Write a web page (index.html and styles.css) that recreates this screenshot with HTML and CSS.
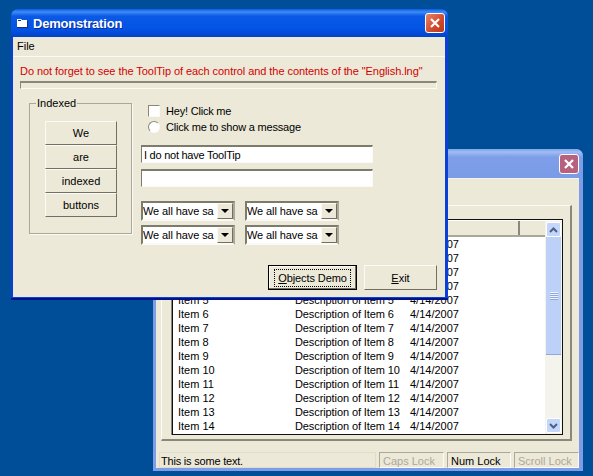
FILE: index.html
```html
<!DOCTYPE html>
<html lang="en">
<head>
  <meta charset="UTF-8" />
  <title>Demonstration</title>
  <link rel="stylesheet" href="styles.css">
</head>
<body>

<div class="desktop">

  <div class="window back">
    <div class="titlebar">
      <span class="title"></span>
      <span class="close"><svg width="12" height="12" viewBox="0 0 12 12"><path d="M2 2l8 8M10 2l-8 8" stroke="#fff" stroke-width="2.2" fill="none"/></svg></span>
    </div>
    <div class="client">
      <div class="frame">
        <div class="list">
          <div class="list-main">
            <div class="list-head"><span class="head-a"></span><span class="head-b"></span></div>
            <div class="row"><span class="c1">Item 1</span><span class="c2">Description of Item 1</span><span>4/14/2007</span></div>
            <div class="row"><span class="c1">Item 2</span><span class="c2">Description of Item 2</span><span>4/14/2007</span></div>
            <div class="row"><span class="c1">Item 3</span><span class="c2">Description of Item 3</span><span>4/14/2007</span></div>
            <div class="row"><span class="c1">Item 4</span><span class="c2">Description of Item 4</span><span>4/14/2007</span></div>
            <div class="row"><span class="c1">Item 5</span><span class="c2">Description of Item 5</span><span>4/14/2007</span></div>
            <div class="row"><span class="c1">Item 6</span><span class="c2">Description of Item 6</span><span>4/14/2007</span></div>
            <div class="row"><span class="c1">Item 7</span><span class="c2">Description of Item 7</span><span>4/14/2007</span></div>
            <div class="row"><span class="c1">Item 8</span><span class="c2">Description of Item 8</span><span>4/14/2007</span></div>
            <div class="row"><span class="c1">Item 9</span><span class="c2">Description of Item 9</span><span>4/14/2007</span></div>
            <div class="row"><span class="c1">Item 10</span><span class="c2">Description of Item 10</span><span>4/14/2007</span></div>
            <div class="row"><span class="c1">Item 11</span><span class="c2">Description of Item 11</span><span>4/14/2007</span></div>
            <div class="row"><span class="c1">Item 12</span><span class="c2">Description of Item 12</span><span>4/14/2007</span></div>
            <div class="row"><span class="c1">Item 13</span><span class="c2">Description of Item 13</span><span>4/14/2007</span></div>
            <div class="row"><span class="c1">Item 14</span><span class="c2">Description of Item 14</span><span>4/14/2007</span></div>
          </div>
          <div class="scrollbar">
            <span class="sb-btn"><svg width="9" height="6" viewBox="0 0 9 6"><path d="M1 5l3.500-3.500L8 5" stroke="#4d6185" stroke-width="2" fill="none"/></svg></span>
            <span class="sb-thumb"><span class="grip"></span></span>
            <span class="sb-track"></span>
            <span class="sb-btn"><svg width="9" height="6" viewBox="0 0 9 6"><path d="M1 1l3.500 3.500L8 1" stroke="#4d6185" stroke-width="2" fill="none"/></svg></span>
          </div>
        </div>
      </div>
      <div class="statusbar">
        <span class="panel panel-main">This is some text.</span>
        <span class="panel panel-off">Caps Lock</span>
        <span class="panel panel-num">Num Lock</span>
        <span class="panel panel-off panel-scroll">Scroll Lock</span>
      </div>
    </div>
  </div>

  <div class="window front">
    <div class="titlebar">
      <svg class="app-icon" width="11" height="10" viewBox="0 0 11 10"><path d="M0 1h4l1 1h5v7H0z" fill="#fff"/><path d="M1 2h3v1H1zM0 9h10v1H0zM10 3h1v7h-1z" fill="#1b2f70"/></svg>
      <span class="title">Demonstration</span>
      <span class="close"><svg width="12" height="12" viewBox="0 0 12 12"><path d="M2 2l8 8M10 2l-8 8" stroke="#fff" stroke-width="2.200" fill="none"/></svg></span>
    </div>
    <div class="client">
      <div class="menubar"><span>File</span></div>
      <div class="content">
        <div class="notice">Do not forget to see the ToolTip of each control and the contents of the "English.lng"</div>
        <div class="progress"></div>
        <div class="main">
          <fieldset class="group">
            <legend>Indexed</legend>
            <button class="btn idx">We</button>
            <button class="btn idx">are</button>
            <button class="btn idx">indexed</button>
            <button class="btn idx">buttons</button>
          </fieldset>
          <div class="controls">
            <label class="opt"><span class="check"></span>Hey! Click me</label>
            <label class="opt"><span class="radio"></span>Click me to show a message</label>
            <div class="textbox tb-first">I do not have ToolTip</div>
            <div class="textbox"></div>
            <div class="combos">
              <div class="combo"><span class="combo-text">We all have sa</span><span class="arrow"></span></div>
              <div class="combo"><span class="combo-text">We all have sa</span><span class="arrow"></span></div>
              <div class="combo"><span class="combo-text">We all have sa</span><span class="arrow"></span></div>
              <div class="combo"><span class="combo-text">We all have sa</span><span class="arrow"></span></div>
            </div>
          </div>
        </div>
        <div class="actions">
          <button class="btn action default"><span class="focus"><u>O</u>bjects Demo</span></button>
          <button class="btn action exit"><span><u>E</u>xit</span></button>
        </div>
      </div>
    </div>
  </div>

</div>

</body>
</html>
```

FILE: styles.css
```css
* {
  box-sizing: border-box;
}
body {
  margin: 0;
  background: #004e98;
  font-family: "Liberation Sans", Arial, sans-serif;
  font-size: 11px;
  color: #000;
}
.desktop {
  position: relative;
  width: 593px;
  height: 476px;
  overflow: hidden;
  background: #004e98;
}

/* windows */
.window {
  position: absolute;
  display: flex;
  flex-direction: column;
  border-radius: 7px 7px 0 0;
}
.front {
  left: 11px;
  top: 9px;
  width: 437px;
  height: 291px;
  background: #0a3fd8;
  border-bottom: 2px solid #00138c;
}
.back {
  left: 153px;
  top: 149px;
  width: 430px;
  height: 322px;
  background: #7f9de6;
}
.titlebar {
  display: flex;
  align-items: center;
  flex: none;
  border-radius: 7px 7px 0 0;
}
.front .titlebar {
  height: 28px;
  padding: 0 3px 0 6px;
  background: linear-gradient(#0a5be8 0, #3d8cf7 3px, #0a5ae6 7px, #0353e5 20px, #0442c8 28px);
}
.back .titlebar {
  height: 29px;
  padding: 0 4px 0 6px;
  background: linear-gradient(#7fa3e8 0, #a1bdf2 3px, #7e9ee9 8px, #7a9be6 29px);
}
.app-icon {
  flex: none;
  margin-right: 5px;
}
.title {
  flex: 1;
  color: #fff;
  font-size: 13px;
  font-weight: bold;
  letter-spacing: -0.2px;
  text-shadow: 1px 1px 0 #0a2a9c;
}
.close {
  display: flex;
  align-items: center;
  justify-content: center;
  width: 20px;
  height: 20px;
  border: 1px solid #fff;
  border-radius: 3px;
  background: linear-gradient(135deg, #e8836a, #d2482a 60%, #b8391c);
}
.back .close {
  background: #b7617e;
}
.client {
  flex: 1;
  display: flex;
  flex-direction: column;
  background: #ece9d8;
}
.front .client {
  margin: 0 3px 1px 2px;
}
.back .client {
  margin: 0 4px 3px 3px;
  border-top: 1px solid #f6f4ea;
}

/* front window contents */
.menubar {
  height: 20px;
  padding: 3px 4px 0;
  border-bottom: 1px solid #fbfaf4;
}
.content {
  flex: 1;
  padding: 0 7px 0 7px;
}
.notice {
  margin-top: 8px;
  height: 14px;
  color: #d40000;
  line-height: 13px;
  letter-spacing: -0.06px;
  white-space: nowrap;
}
.progress {
  height: 8px;
  margin-top: 2px;
  margin-right: 1px;
  border: 1px solid;
  border-color: #8a8878 #fbfaf4 #fbfaf4 #8a8878;
  border-top-width: 2px;
}
.main {
  display: flex;
  margin-top: 14px;
}
.group {
  position: relative;
  width: 103px;
  height: 131px;
  margin: 0 0 0 9px;
  padding: 17px 0 0 15px;
  border: 1px solid #aca899;
  box-shadow: 1px 1px 0 #fbfaf4;
}
.group legend {
  position: absolute;
  left: 6px;
  top: -7px;
  padding: 0 1px;
  background: #ece9d8;
}
.btn {
  display: block;
  padding: 0;
  font: inherit;
  color: #000;
  background: #ece9d8;
  border: 1px solid;
  border-color: #fbfaf4 #716f64 #716f64 #fbfaf4;
}
.idx {
  width: 72px;
  height: 24px;
}
.controls {
  width: 296px;
  margin-left: 9px;
}
.opt {
  display: flex;
  align-items: center;
  height: 16px;
  margin-left: 7px;
  line-height: 15px;
  letter-spacing: -0.2px;
}
.check,
.radio {
  flex: none;
  width: 12px;
  height: 12px;
  margin-right: 6px;
  background: #fff;
  border: 1px solid #8a8878;
  border-right-color: #fbfaf4;
  border-bottom-color: #fbfaf4;
}
.radio {
  border-radius: 50%;
}
.textbox {
  width: 232px;
  height: 18px;
  margin-bottom: 6px;
  padding: 2px 2px 0;
  letter-spacing: -0.25px;
  background: #fff;
  border: 1px solid;
  border-color: #7d7b6c #fbfaf4 #fbfaf4 #7d7b6c;
  border-top-width: 2px;
}
.tb-first {
  margin-top: 10px;
}
.combos {
  display: grid;
  grid-template-columns: 94px 94px;
  grid-auto-rows: 20px;
  gap: 4px 10px;
  margin-top: 14px;
}
.combo {
  display: flex;
  align-items: center;
  background: #fff;
  border: 2px solid;
  border-color: #7d7b6c #aca899 #fbfaf4 #7d7b6c;
}
.combo-text {
  flex: 1;
  letter-spacing: -0.1px;
  white-space: nowrap;
  overflow: hidden;
}
.arrow {
  position: relative;
  flex: none;
  width: 16px;
  height: 16px;
  background: #ece9d8;
  border: 1px solid;
  border-color: #fbfaf4 #716f64 #716f64 #fbfaf4;
}
.arrow::after {
  content: "";
  position: absolute;
  left: 3px;
  top: 5px;
  border: 4px solid transparent;
  border-top-color: #000;
  border-bottom: 0;
}
.actions {
  display: flex;
  justify-content: flex-end;
  gap: 7px;
  margin-top: 20px;
  padding-right: 1px;
}
.action {
  height: 25px;
  display: flex;
  align-items: center;
  justify-content: center;
}
.default {
  width: 89px;
  letter-spacing: -0.1px;
  border: 1px solid #000;
  box-shadow: inset -1px -1px 0 #716f64, inset 1px 1px 0 #fbfaf4;
}
.exit {
  width: 73px;
}
.focus {
  padding: 2px 3px;
  outline: 1px dotted #000;
}

/* back window contents */
.frame {
  margin: 26px 7px 0 5px;
  height: 236px;
  padding: 13px 7px 0 10px;
  border: 1px solid;
  border-color: #fbfaf4 #8a8878 #8a8878 #fbfaf4;
  border-width: 1px 2px 2px 1px;
}
.list {
  display: flex;
  height: 216px;
  padding: 1px 0 0 1px;
  background: #fff;
  border: 1px solid #111;
  box-shadow: -1px 0 0 #8a8878;
  overflow: hidden;
}
.list-main {
  flex: 1;
  overflow: hidden;
}
.list-head {
  display: flex;
  height: 17px;
  margin-top: -1px;
  background: #ece9d8;
  border-bottom: 2px solid #aca899;
}
.head-a {
  width: 346px;
  border-right: 2px solid #8a8878;
}
.head-b {
  flex: 1;
}
.row {
  display: flex;
  height: 14px;
  line-height: 14px;
  padding-left: 4px;
  white-space: nowrap;
}
.c1 {
  width: 117px;
}
.c2 {
  width: 115px;
  letter-spacing: -0.1px;
}
.scrollbar {
  display: flex;
  flex-direction: column;
  flex: none;
  width: 17px;
  padding: 1px;
  background: #f4f3ec;
}
.sb-btn {
  display: flex;
  align-items: center;
  justify-content: center;
  flex: none;
  height: 15px;
  background: #c5d6fb;
  border: 1px solid #fff;
  border-radius: 2px;
}
.sb-thumb {
  display: flex;
  align-items: center;
  justify-content: center;
  flex: none;
  height: 118px;
  background: #bcd0f8;
  border-bottom: 1px solid #8ea8e0;
}
.grip {
  width: 8px;
  height: 8px;
  background: repeating-linear-gradient(#eef3fe 0 1px, #8ea8e0 1px 2px);
}
.sb-track {
  flex: 1;
}
.statusbar {
  display: flex;
  gap: 3px;
  margin: 11px 0 0 3px;
  height: 16px;
}
.panel {
  height: 16px;
  padding: 2px 0 0 3px;
  line-height: 13px;
  white-space: nowrap;
  overflow: hidden;
  border: 1px solid;
  border-color: #aca899 #fbfaf4 #fbfaf4 #aca899;
}
.panel-main {
  width: 217px;
  padding-left: 1px;
  letter-spacing: -0.2px;
  border-color: #e0ddcb;
}
.panel-off {
  width: 65px;
  color: #aca899;
}
.panel-num {
  width: 64px;
}
.panel-scroll {
  width: 65px;
}
```
